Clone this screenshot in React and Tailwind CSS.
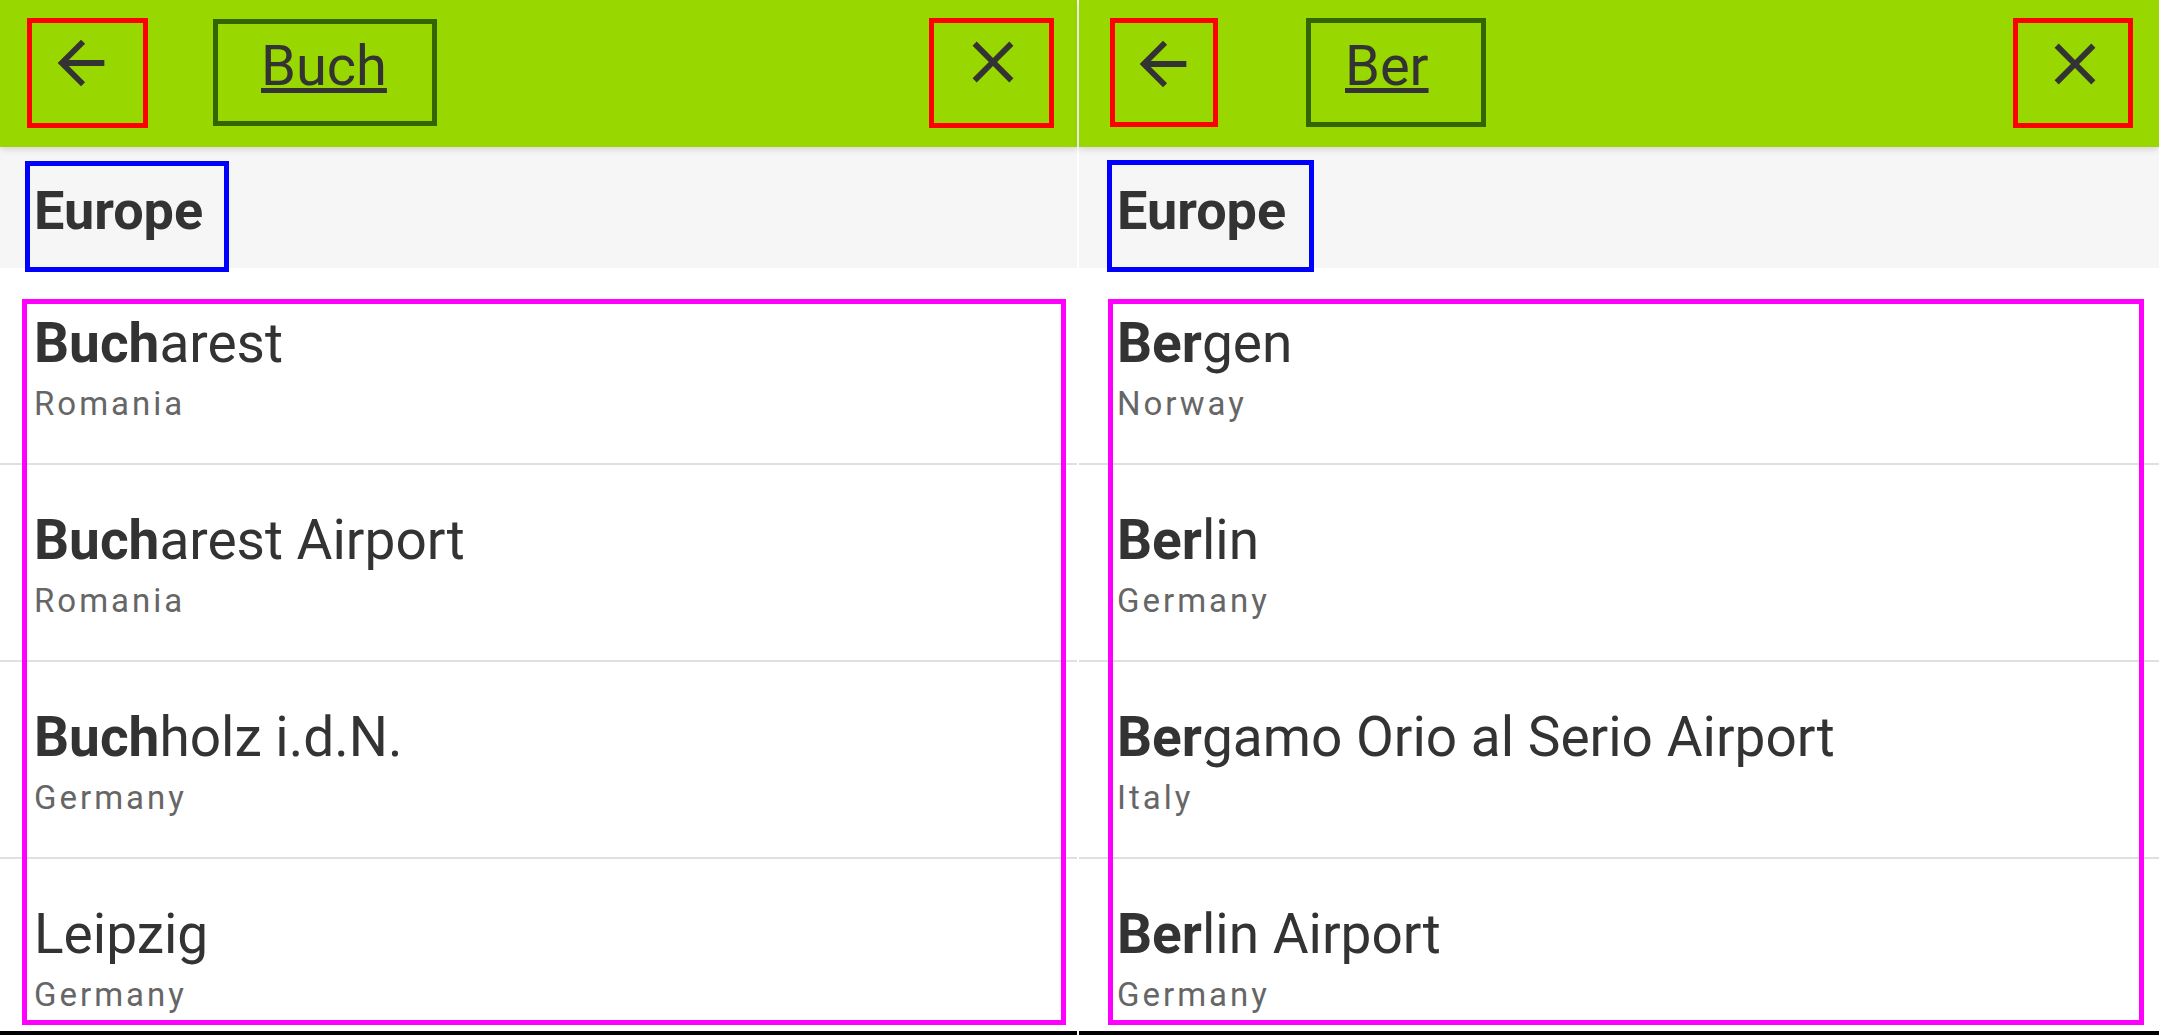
import React from 'react';

const ArrowBack = () => (
  <svg width="70" height="70" viewBox="0 0 24 24" fill="#333333" className="block">
    <path d="M20 11H7.83l5.59-5.59L12 4l-8 8 8 8 1.41-1.41L7.83 13H20v-2z" />
  </svg>
);

const CloseIcon = () => (
  <svg width="70" height="70" viewBox="0 0 24 24" fill="#333333" className="block">
    <path d="M19 6.41L17.59 5 12 10.59 6.41 5 5 6.41 10.59 12 5 17.59 6.41 19 12 13.41 17.59 19 19 17.59 13.41 12z" />
  </svg>
);

const panels = [
  {
    width: 'w-[1077px]',
    query: 'Buch',
    back: 'ml-[27px] mt-[18px] w-[121px] h-[110px] pl-[14px] pt-[5px]',
    field: 'ml-[65px] mt-[19px] w-[224px] h-[107px] pl-[43px] pt-[9px]',
    close: 'mr-[23px] mt-[18px] w-[125px] h-[110px] pl-[24px] pt-[4px]',
    blue: 'ml-[25px] mt-[14px] w-[204px] h-[111px] pl-[4px] pt-[13px]',
    rowPad: 'pl-[34px]',
    magenta: 'left-[22px] top-[299px] w-[1044px] h-[726px]',
    items: [
      { bold: 'Buch', rest: 'arest', sub: 'Romania' },
      { bold: 'Buch', rest: 'arest Airport', sub: 'Romania' },
      { bold: 'Buch', rest: 'holz i.d.N.', sub: 'Germany' },
      { bold: '', rest: 'Leipzig', sub: 'Germany' },
    ],
  },
  {
    width: 'w-[1080px]',
    query: 'Ber',
    back: 'ml-[31px] mt-[18px] w-[108px] h-[109px] pl-[13px] pt-[6px]',
    field: 'ml-[88px] mt-[18px] w-[180px] h-[109px] pl-[34px] pt-[10px]',
    close: 'mr-[26px] mt-[18px] w-[120px] h-[110px] pl-[22px] pt-[6px]',
    blue: 'ml-[28px] mt-[13px] w-[207px] h-[112px] pl-[5px] pt-[14px]',
    rowPad: 'pl-[38px]',
    magenta: 'left-[29px] top-[299px] w-[1036px] h-[726px]',
    items: [
      { bold: 'Ber', rest: 'gen', sub: 'Norway' },
      { bold: 'Ber', rest: 'lin', sub: 'Germany' },
      { bold: 'Ber', rest: 'gamo Orio al Serio Airport', sub: 'Italy' },
      { bold: 'Ber', rest: 'lin Airport', sub: 'Germany' },
    ],
  },
];

function Panel({ cfg }) {
  return (
    <div className={`relative flex flex-col h-full shrink-0 ${cfg.width}`}>
      <header className="relative z-10 flex items-start h-[147px] shrink-0 bg-[#98d800] shadow-[0_3px_6px_rgba(0,0,0,0.12)]">
        <div className={`flex items-start border-[5px] border-[#ff0000] ${cfg.back}`}>
          <ArrowBack />
        </div>
        <div className={`border-[5px] border-[#336600] ${cfg.field}`}>
          <span className="block text-[56px] leading-[66px] text-[#333333] underline">
            {cfg.query}
          </span>
        </div>
        <div className="flex-1" />
        <div className={`flex items-start border-[5px] border-[#ff0000] ${cfg.close}`}>
          <CloseIcon />
        </div>
      </header>
      <div className="flex items-start h-[121px] shrink-0 bg-[#f6f6f6]">
        <div className={`relative z-10 border-[5px] border-[#0000ff] ${cfg.blue}`}>
          <span className="block text-[54px] leading-[64px] font-bold text-[#333333]">Europe</span>
        </div>
      </div>
      <div className="flex-1 overflow-hidden bg-white">
        {cfg.items.map((it, i) => (
          <div
            key={i}
            className={`h-[197px] border-b-2 border-[#e0e0e0] pt-[43px] ${cfg.rowPad}`}
          >
            <div className="text-[55px] leading-[64px] text-[#333333] whitespace-nowrap">
              <span className="font-bold">{it.bold}</span>
              {it.rest}
            </div>
            <div className="mt-[10px] text-[33px] leading-[38px] tracking-[3px] text-[#666666] whitespace-nowrap">
              {it.sub}
            </div>
          </div>
        ))}
      </div>
      <div className="h-[4px] shrink-0 bg-black" />
      <div className={`absolute border-[5px] border-[#ff00ff] pointer-events-none ${cfg.magenta}`} />
    </div>
  );
}

export default function App() {
  return (
    <div className="flex w-[2159px] h-[1035px] overflow-hidden bg-white font-['Roboto',sans-serif]">
      <Panel cfg={panels[0]} />
      <div className="w-[2px] h-full shrink-0 bg-white" />
      <Panel cfg={panels[1]} />
    </div>
  );
}
